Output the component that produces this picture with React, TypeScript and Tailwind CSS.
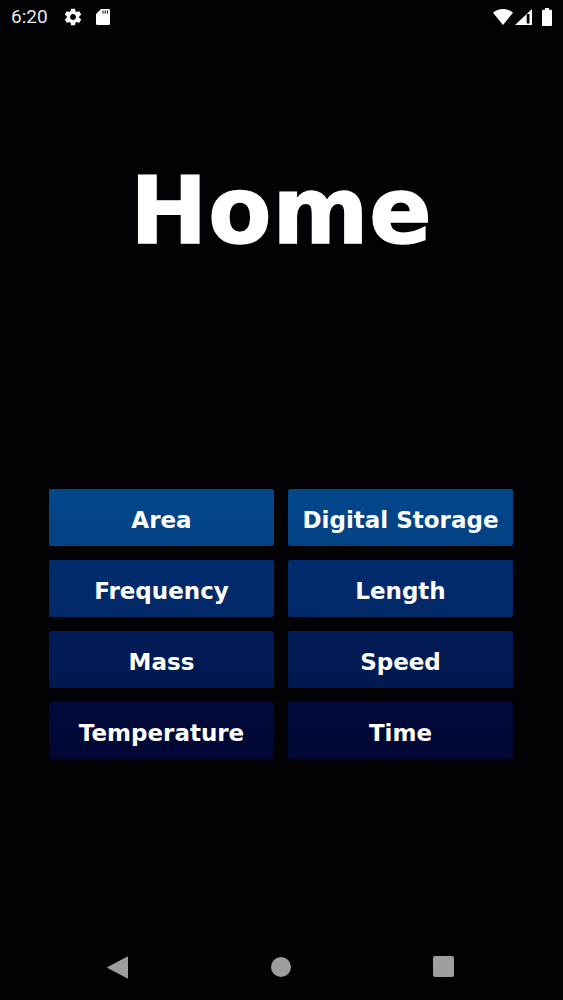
const buttons = [
  { label: 'Area', color: 'from-[#03478b] to-[#034285]' },
  { label: 'Digital Storage', color: 'from-[#03478b] to-[#034285]' },
  { label: 'Frequency', color: 'from-[#022c6f] to-[#012968]' },
  { label: 'Length', color: 'from-[#022c6f] to-[#012968]' },
  { label: 'Mass', color: 'from-[#011b56] to-[#011950]' },
  { label: 'Speed', color: 'from-[#011b56] to-[#011950]' },
  { label: 'Temperature', color: 'from-[#000a3b] to-[#000733]' },
  { label: 'Time', color: 'from-[#000a3b] to-[#000733]' },
];

function StatusBar() {
  return (
    <div className="h-[33px] flex items-center justify-between pl-[11px] pr-[11px] text-white">
      <div className="flex items-center">
        <span className="text-[19px] leading-none font-['Roboto',sans-serif] text-[#e8e8e8]">6:20</span>
        <svg className="ml-[15px]" width="20" height="20" viewBox="0 0 24 24" fill="white">
          <path d="M19.43 12.98c.04-.32.07-.64.07-.98s-.03-.66-.07-.98l2.11-1.65c.19-.15.24-.42.12-.64l-2-3.46c-.12-.22-.39-.3-.61-.22l-2.49 1c-.52-.4-1.08-.73-1.69-.98l-.38-2.65C14.46 2.18 14.25 2 14 2h-4c-.25 0-.46.18-.49.42l-.38 2.65c-.61.25-1.17.59-1.69.98l-2.49-1c-.23-.09-.49 0-.61.22l-2 3.46c-.13.22-.07.49.12.64l2.11 1.65c-.04.32-.07.65-.07.98s.03.66.07.98l-2.11 1.65c-.19.15-.24.42-.12.64l2 3.46c.12.22.39.3.61.22l2.49-1c.52.4 1.08.73 1.69.98l.38 2.65c.03.24.24.42.49.42h4c.25 0 .46-.18.49-.42l.38-2.65c.61-.25 1.17-.59 1.69-.98l2.49 1c.23.09.49 0 .61-.22l2-3.46c.12-.22.07-.49-.12-.64l-2.11-1.65zM12 15.5c-1.93 0-3.5-1.57-3.5-3.5s1.57-3.5 3.5-3.5 3.5 1.57 3.5 3.5-1.57 3.5-3.5 3.5z" />
        </svg>
        <svg className="ml-[13px]" width="14" height="16" viewBox="0 0 14 16" fill="white">
          <path d="M5 0h7.500A1.500 1.500 0 0 1 14 1.500v13a1.500 1.500 0 0 1-1.500 1.500h-11A1.500 1.500 0 0 1 0 14.500V5z" />
          <path d="M6.500 1.500h1v3h-1zM8.700 1.500h1v3h-1zM10.900 1.500h1v3h-1z" fill="black" />
        </svg>
      </div>
      <div className="flex items-center">
        <svg width="20" height="16" viewBox="0 0 20 16" fill="white">
          <path d="M10 16 0 3.700C2.500 1.400 6 0 10 0s7.500 1.400 10 3.700z" />
        </svg>
        <svg className="ml-[2px]" width="17" height="16" viewBox="0 0 17 16">
          <path d="M0 16 17 0v16z" fill="white" />
          <path d="M11.700 5h2.800v9.500h-2.800z" fill="black" />
        </svg>
        <svg className="ml-[10px]" width="10" height="18" viewBox="0 0 10 18" fill="white">
          <path d="M3 0h4v1.800h2a1 1 0 0 1 1 1V17a1 1 0 0 1-1 1H1a1 1 0 0 1-1-1V2.800a1 1 0 0 1 1-1h2z" />
        </svg>
      </div>
    </div>
  );
}

function NavBar() {
  return (
    <div className="h-[45px] flex items-start pl-[107px] pr-[109px] justify-between pt-[1px]">
      <svg width="21" height="23" viewBox="0 0 21 23" fill="#9e9e9e">
        <path d="M20 .7a.7.7 0 0 1 1 .6v20.400a.7.7 0 0 1-1 .6L.6 12a.6.6 0 0 1 0-1z" />
      </svg>
      <div className="w-[20px] h-[20px] mt-[1px] rounded-full bg-[#9e9e9e]" />
      <div className="w-[21px] h-[21px] rounded-[2px] bg-[#9e9e9e]" />
    </div>
  );
}

export default function App() {
  return (
    <div className="w-[563px] h-[1000px] bg-[#020204] flex flex-col font-['DejaVu_Sans',sans-serif] overflow-hidden">
      <StatusBar />
      <div className="h-[456px] pt-[126px] flex justify-center">
        <h1 className="text-[92px] leading-[106px] font-bold text-white tracking-[1px] [-webkit-text-stroke:1.500px_white]">Home</h1>
      </div>
      <div className="grid grid-cols-2 gap-[14px] pl-[49px] pr-[50px]">
        {buttons.map((b) => (
          <button
            key={b.label}
            className={`h-[57px] pt-[5px] rounded-[2px] bg-gradient-to-b ${b.color} text-white text-[23px] font-bold flex items-center justify-center whitespace-nowrap`}
          >
            {b.label}
          </button>
        ))}
      </div>
      <div className="flex-1" />
      <NavBar />
    </div>
  );
}
